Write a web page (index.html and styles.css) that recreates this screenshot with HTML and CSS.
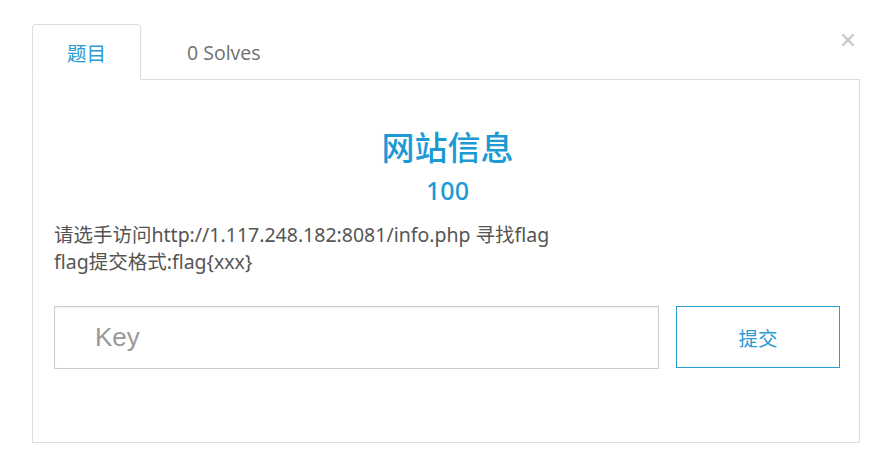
FILE: index.html
```html
<!DOCTYPE html>
<html lang="zh-CN">
<head>
    <meta charset="UTF-8">
    <title>网站信息</title>
    <link rel="stylesheet" href="styles.css">
</head>
<body>
    <div class="modal">
        <button class="close" type="button" aria-label="Close">
            <svg width="14" height="14" viewBox="0 0 14 14">
                <path d="M1.5 1.5 L12.5 12.5 M12.5 1.5 L1.5 12.5" stroke="#c8c8c8" stroke-width="2.4" fill="none"/>
            </svg>
        </button>
        <ul class="tabs">
            <li class="tab active">题目</li>
            <li class="tab">0 Solves</li>
        </ul>
        <div class="panel">
            <h2 class="title">网站信息</h2>
            <div class="points">100</div>
            <p class="desc">请选手访问http://1.117.248.182:8081/info.php 寻找flag<br>flag提交格式:flag{xxx}</p>
            <form class="submit-row">
                <input class="key" type="text" placeholder="Key">
                <button class="submit" type="submit">提交</button>
            </form>
        </div>
    </div>
</body>
</html>
```

FILE: styles.css
```css
body {
    margin: 0;
    background-color: #fff;
    font-family: "Open Sans", "Noto Sans CJK SC", sans-serif;
}
.modal {
    position: relative;
    width: 828px;
    padding: 24px 0 0 32px;
}
.close {
    position: absolute;
    top: 33px;
    right: 5px;
    padding: 0;
    border: none;
    background: none;
    line-height: 0;
}
.tabs {
    display: flex;
    margin: 0;
    padding: 0;
    list-style: none;
    border-bottom: 1px solid #ddd;
}
.tab {
    height: 54px;
    line-height: 56px;
    padding: 0 35px;
    margin-bottom: -1px;
    border: 1px solid transparent;
    border-radius: 4px 4px 0 0;
    font-size: 19.5px;
    color: #6f6f6f;
}
.tab + .tab {
    padding-left: 45px;
}
.tab.active {
    padding: 0 34px;
    color: #2a9ad2;
    border-color: #ddd;
    border-bottom-color: #fff;
    background-color: #fff;
    font-family: "Noto Sans CJK SC", sans-serif;
}
.panel {
    height: 363px;
    padding: 44px 18px 0 21px;
    border: 1px solid #ddd;
    border-top: none;
    box-sizing: border-box;
}
.title {
    margin: 0;
    text-align: center;
    font-family: "Noto Sans CJK SC", sans-serif;
    font-size: 33px;
    font-weight: 500;
    line-height: 44px;
    color: #1b9ad6;
}
.points {
    margin-top: 5px;
    text-align: center;
    font-family: "Noto Sans", sans-serif;
    font-size: 25px;
    font-weight: 500;
    line-height: 34px;
    color: #1b9ad6;
}
.desc {
    margin: 14px 0 0;
    font-family: "Noto Sans", "Noto Sans CJK SC", sans-serif;
    font-size: 19.5px;
    line-height: 27px;
    color: #555;
}
.submit-row {
    display: flex;
    gap: 17px;
    margin-top: 31px;
}
.key {
    width: 605px;
    height: 63px;
    padding: 0 40px;
    box-sizing: border-box;
    border: 1px solid #ccc;
    box-shadow: inset 0 1px 2px rgba(0, 0, 0, 0.06);
    font-family: "Liberation Sans", sans-serif;
    font-size: 26px;
    color: #555;
}
.key::placeholder {
    color: #999;
}
.submit {
    width: 164px;
    height: 62px;
    border: 1px solid #2a9ad2;
    background-color: #fff;
    font-family: "Noto Sans CJK SC", sans-serif;
    font-size: 19.5px;
    color: #2a9ad2;
}
```
